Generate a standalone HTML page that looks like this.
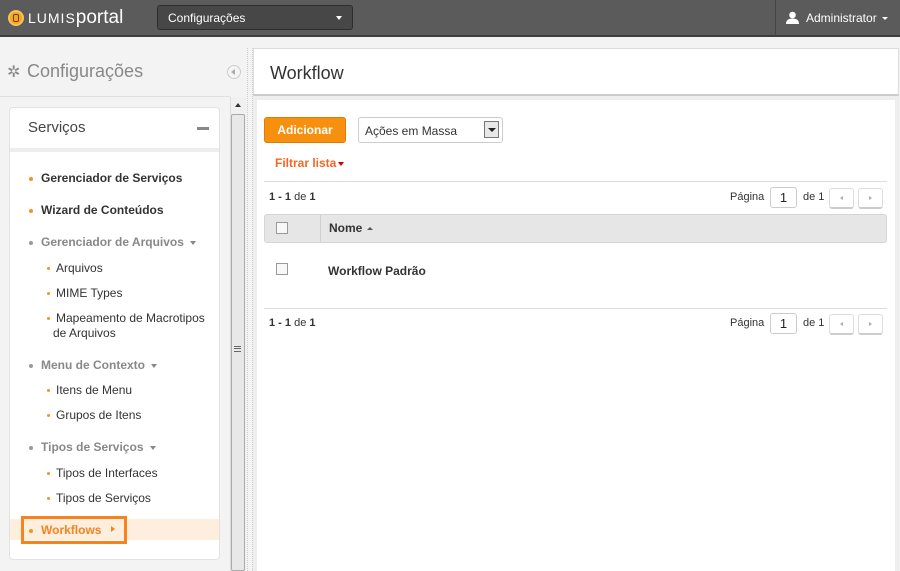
<!DOCTYPE html>
<html><head><meta charset="utf-8"><style>
*{margin:0;padding:0;box-sizing:border-box}
body{width:900px;height:571px;overflow:hidden;background:#f3f3f3;font-family:"Liberation Sans",sans-serif;font-size:12px;color:#333;position:relative}
.a{position:absolute;white-space:nowrap}
.b{font-weight:bold}
.dot{position:absolute;width:4px;height:4px;border-radius:50%;background:#f7931e}
.sdot{position:absolute;width:3px;height:3px;border-radius:50%;background:#f7931e}
.car{display:inline-block;width:0;height:0;border-left:3px solid transparent;border-right:3px solid transparent;border-top:4px solid #888;vertical-align:middle;margin-left:6px}
</style></head><body>
<div class="a" style="left:0;top:0;width:900px;height:37px;background:#5b5b5b;border-bottom:2px solid #3d3d3d"></div>
<div class="a" style="left:8px;top:10px;width:16px;height:16px;border-radius:50%;background:#f5a623;border:2px solid #f8c060"></div>
<div class="a" style="left:13px;top:14px;width:6px;height:8px;border:1.5px solid #6b4500;border-radius:2px"></div>
<div class="a" style="left:28px;top:7px;color:#fff;font-size:14px;letter-spacing:1px">LUMIS<span style="font-size:19px;letter-spacing:0">portal</span></div>
<div class="a" style="left:157px;top:5px;width:196px;height:25px;background:#474747;border:1px solid #2e2e2e;border-radius:3px"></div>
<div class="a" style="left:168px;top:11px;color:#fff;font-size:12px">Configurações</div>
<div class="a" style="left:336px;top:16px;border-left:3px solid transparent;border-right:3px solid transparent;border-top:4px solid #fff"></div>
<div class="a" style="left:775px;top:0;width:1px;height:36px;background:#444"></div>
<svg class="a" style="left:786px;top:11px" width="13" height="13" viewBox="0 0 13 13"><circle cx="6.5" cy="4" r="3.3" fill="#fff"/><path d="M0 13 Q0 7.5 6.5 7.5 Q13 7.5 13 13Z" fill="#fff"/></svg>
<div class="a" style="left:806px;top:11px;color:#fff;font-size:12px">Administrator</div>
<div class="a" style="left:882px;top:17px;border-left:3px solid transparent;border-right:3px solid transparent;border-top:3px solid #fff"></div>
<div class="a" style="left:7px;top:62px;color:#888;font-size:16px">✲</div>
<div class="a" style="left:27px;top:61px;color:#888;font-size:18px">Configurações</div>
<div class="a" style="left:227px;top:65px;width:14px;height:14px;border-radius:50%;border:1px solid #ccc;background:#f5f5f5"></div>
<div class="a" style="left:231px;top:69px;border-top:3px solid transparent;border-bottom:3px solid transparent;border-right:4px solid #aaa"></div>
<div class="a" style="left:0;top:96px;width:230px;height:1px;background:#e0e0e0"></div>
<div class="a" style="left:9px;top:107px;width:211px;height:453px;background:#fff;border:1px solid #e2e2e2;border-radius:4px"></div>
<div class="a" style="left:10px;top:148px;width:209px;height:4px;background:#ededed"></div>
<div class="a" style="left:28px;top:119px;color:#444;font-size:15px">Serviços</div>
<div class="a" style="left:197px;top:127px;width:12px;height:3px;background:#888"></div>
<div class="dot" style="left:29px;top:177px"></div><div class="a b" style="left:41px;top:171px">Gerenciador de Serviços</div>
<div class="dot" style="left:29px;top:209px"></div><div class="a b" style="left:41px;top:203px">Wizard de Conteúdos</div>
<div class="dot" style="left:29px;top:241px;background:#999"></div><div class="a b" style="left:41px;top:235px;color:#888">Gerenciador de Arquivos<span class="car"></span></div>
<div class="sdot" style="left:47px;top:267px"></div><div class="a" style="left:56px;top:261px">Arquivos</div>
<div class="sdot" style="left:47px;top:292px"></div><div class="a" style="left:56px;top:286px">MIME Types</div>
<div class="sdot" style="left:47px;top:317px"></div><div class="a" style="left:56px;top:311px">Mapeamento de Macrotipos</div>
<div class="a" style="left:53px;top:326px">de Arquivos</div>
<div class="dot" style="left:29px;top:364px;background:#999"></div><div class="a b" style="left:41px;top:358px;color:#888">Menu de Contexto<span class="car"></span></div>
<div class="sdot" style="left:47px;top:389px"></div><div class="a" style="left:56px;top:383px">Itens de Menu</div>
<div class="sdot" style="left:47px;top:414px"></div><div class="a" style="left:56px;top:408px">Grupos de Itens</div>
<div class="dot" style="left:29px;top:446px;background:#999"></div><div class="a b" style="left:41px;top:440px;color:#888">Tipos de Serviços<span class="car"></span></div>
<div class="sdot" style="left:47px;top:472px"></div><div class="a" style="left:56px;top:466px">Tipos de Interfaces</div>
<div class="sdot" style="left:47px;top:497px"></div><div class="a" style="left:56px;top:491px">Tipos de Serviços</div>
<div class="a" style="left:10px;top:519px;width:209px;height:21px;background:#fdeedd"></div>
<div class="a" style="left:21px;top:516px;width:106px;height:28px;border:3px solid #f7821e"></div>
<div class="dot" style="left:29px;top:529px"></div><div class="a b" style="left:41px;top:523px;color:#f7821e">Workflows</div>
<div class="a" style="left:111px;top:526px;border-top:3px solid transparent;border-bottom:3px solid transparent;border-left:4px solid #f7821e"></div>
<div class="a" style="left:230px;top:97px;width:16px;height:474px;background:#f0f0f0;border-left:1px solid #ddd"></div>
<div class="a" style="left:235px;top:103px;border-left:3px solid transparent;border-right:3px solid transparent;border-bottom:4px solid #333"></div>
<div class="a" style="left:231px;top:114px;width:14px;height:457px;background:#e8e8e8;border:1px solid #aaa;border-radius:2px"></div>
<div class="a" style="left:234px;top:346px;width:7px;height:6px;border-top:1px solid #666;border-bottom:1px solid #666"></div>
<div class="a" style="left:234px;top:348px;width:7px;height:1px;background:#666"></div>
<div class="a" style="left:247px;top:48px;width:6px;height:523px;border-left:1px dotted #ccc;border-right:1px dotted #ccc"></div>
<div class="a" style="left:253px;top:48px;width:646px;height:48px;background:#fff;border:1px solid #ddd;border-bottom:2px solid #ccc"></div>
<div class="a" style="left:270px;top:63px;font-size:18px;color:#333">Workflow</div>
<div class="a" style="left:253px;top:96px;width:646px;height:475px;background:#eee"></div>
<div class="a" style="left:257px;top:100px;width:638px;height:471px;background:#fff"></div>
<div class="a b" style="left:264px;top:117px;width:82px;height:26px;background:#f7900e;border:1px solid #e07a00;border-radius:3px;color:#fff;text-align:center;line-height:24px">Adicionar</div>
<div class="a" style="left:358px;top:117px;width:145px;height:26px;border:1px solid #ccc;border-radius:3px"></div>
<div class="a" style="left:365px;top:124px">Ações em Massa</div>
<div class="a" style="left:484px;top:121px;width:15px;height:17px;background:#e8e8e8;border:1px solid #777"></div>
<div class="a" style="left:488px;top:128px;border-left:4px solid transparent;border-right:4px solid transparent;border-top:4px solid #222"></div>
<div class="a b" style="left:275px;top:156px;color:#f26722">Filtrar lista</div>
<div class="a" style="left:338px;top:162px;border-left:3px solid transparent;border-right:3px solid transparent;border-top:4px solid #c00"></div>
<div class="a" style="left:264px;top:181px;width:623px;height:1px;background:#ddd"></div>
<div class="a" style="left:269px;top:191px;font-size:11px"><b>1 - 1</b> de <b>1</b></div>
<div class="a" style="left:730px;top:191px;font-size:11px">Página</div>
<div class="a" style="left:770px;top:187px;width:27px;height:21px;border:1px solid #ccc;border-radius:3px;text-align:center;line-height:19px;font-size:13px;color:#222">1</div>
<div class="a" style="left:803px;top:191px;font-size:11px">de 1</div>
<div class="a" style="left:829px;top:188px;width:25px;height:21px;border:1px solid #ddd;border-bottom:2px solid #ccc;border-radius:3px"></div>
<div class="a" style="left:840px;top:196px;border-top:2px solid transparent;border-bottom:2px solid transparent;border-right:3px solid #aaa"></div>
<div class="a" style="left:858px;top:188px;width:25px;height:21px;border:1px solid #ddd;border-bottom:2px solid #ccc;border-radius:3px"></div>
<div class="a" style="left:869px;top:196px;border-top:2px solid transparent;border-bottom:2px solid transparent;border-left:3px solid #aaa"></div>
<div class="a" style="left:264px;top:214px;width:623px;height:29px;background:#e6e6e6;border:1px solid #d5d5d5;border-radius:3px"></div>
<div class="a" style="left:320px;top:215px;width:1px;height:27px;background:#d0d0d0"></div>
<div class="a" style="left:276px;top:222px;width:12px;height:12px;border:1px solid #999;background:#f8f8f8"></div>
<div class="a b" style="left:329px;top:221px">Nome</div>
<div class="a" style="left:367px;top:227px;border-left:3px solid transparent;border-right:3px solid transparent;border-bottom:3px solid #555"></div>
<div class="a" style="left:276px;top:263px;width:12px;height:12px;border:1px solid #999;background:#f8f8f8"></div>
<div class="a b" style="left:328px;top:264px">Workflow Padrão</div>
<div class="a" style="left:264px;top:308px;width:623px;height:1px;background:#ddd"></div>
<div class="a" style="left:269px;top:317px;font-size:11px"><b>1 - 1</b> de <b>1</b></div>
<div class="a" style="left:730px;top:317px;font-size:11px">Página</div>
<div class="a" style="left:770px;top:313px;width:27px;height:21px;border:1px solid #ccc;border-radius:3px;text-align:center;line-height:19px;font-size:13px;color:#222">1</div>
<div class="a" style="left:803px;top:317px;font-size:11px">de 1</div>
<div class="a" style="left:829px;top:314px;width:25px;height:21px;border:1px solid #ddd;border-bottom:2px solid #ccc;border-radius:3px"></div>
<div class="a" style="left:840px;top:322px;border-top:2px solid transparent;border-bottom:2px solid transparent;border-right:3px solid #aaa"></div>
<div class="a" style="left:858px;top:314px;width:25px;height:21px;border:1px solid #ddd;border-bottom:2px solid #ccc;border-radius:3px"></div>
<div class="a" style="left:869px;top:322px;border-top:2px solid transparent;border-bottom:2px solid transparent;border-left:3px solid #aaa"></div>
</body></html>
